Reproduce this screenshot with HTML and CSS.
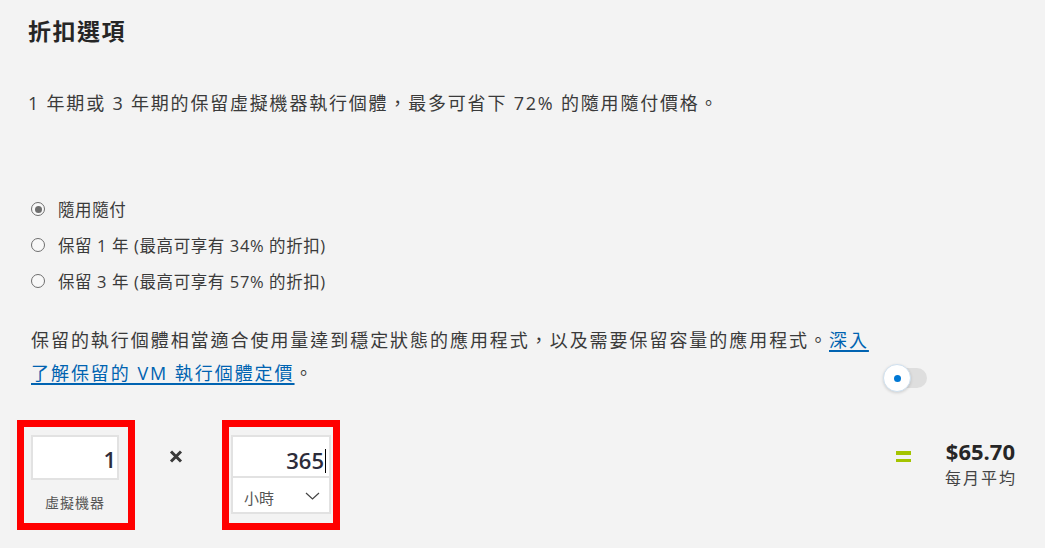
FILE: index.html
```html
<!DOCTYPE html>
<html lang="zh-Hant">
<head>
<meta charset="utf-8">
<title>折扣選項</title>
<link rel="stylesheet" href="styles.css">
</head>
<body>
<div class="page">
  <h2 class="title">折扣選項</h2>
  <p class="intro">1 年期或 3 年期的保留虛擬機器執行個體，最多可省下 72% 的隨用隨付價格。</p>
  <div class="radios">
    <label class="radio-row"><span class="radio checked"></span><span class="radio-label">隨用隨付</span></label>
    <label class="radio-row"><span class="radio"></span><span class="radio-label">保留 1 年 (最高可享有 34% 的折扣)</span></label>
    <label class="radio-row"><span class="radio"></span><span class="radio-label">保留 3 年 (最高可享有 57% 的折扣)</span></label>
  </div>
  <div class="note-row">
    <p class="note">保留的執行個體相當適合使用量達到穩定狀態的應用程式，以及需要保留容量的應用程式。<a href="#" class="link">深入了解保留的 VM 執行個體定價</a>。</p>
    <div class="toggle"><span class="track"></span><span class="knob"><span class="dot"></span></span></div>
  </div>
  <div class="calc">
    <div class="box box-vm">
      <div class="num-input">1</div>
      <div class="box-label">虛擬機器</div>
    </div>
    <div class="op times"><svg width="14" height="13" viewBox="0 0 14 13"><path d="M2 1.5 L12 11.5 M12 1.5 L2 11.5" stroke="#3a3a3a" stroke-width="3" stroke-linecap="butt"/></svg></div>
    <div class="box box-hours">
      <div class="combo">
        <div class="num-input hours">365<span class="caret"></span></div>
        <div class="select"><span>小時</span>
          <svg class="chev" width="15" height="8" viewBox="0 0 15 8"><path d="M1 1 L7.5 7 L14 1" fill="none" stroke="#444" stroke-width="1.2"/></svg>
        </div>
      </div>
    </div>
    <div class="result">
      <div class="equals"><span></span><span></span></div>
      <div class="price">
        <div class="amount">$65.70</div>
        <div class="per">每月平均</div>
      </div>
    </div>
  </div>
</div>
</body>
</html>
```

FILE: styles.css
```css
* { box-sizing: border-box; }
html, body {
  margin: 0;
  padding: 0;
  background: #f3f3f3;
}
body {
  font-family: "Open Sans", "Noto Sans CJK TC", sans-serif;
  color: #3a3a3a;
  width: 1045px;
  height: 548px;
  overflow: hidden;
}
.page {
  padding: 16px 30px 0 28px;
}
.title {
  margin: 0;
  font-size: 23px;
  line-height: 30px;
  font-weight: 700;
  color: #262626;
  letter-spacing: 1.5px;
}
.intro {
  margin: 45px 0 0 0;
  font-size: 18px;
  line-height: 24px;
  letter-spacing: 1.8px;
}
.radios {
  margin-top: 76px;
  display: flex;
  flex-direction: column;
}
.radio-row {
  display: flex;
  align-items: center;
  height: 36px;
  font-size: 16.5px;
  letter-spacing: 0.6px;
}
.radio {
  width: 14px;
  height: 14px;
  border: 1.5px solid #6e6e6e;
  border-radius: 50%;
  margin-left: 3px;
  margin-right: 13px;
  display: flex;
  align-items: center;
  justify-content: center;
  background: #f8f8f8;
}
.radio.checked::after {
  content: "";
  width: 7px;
  height: 7px;
  border-radius: 50%;
  background: #6e6e6e;
}
.note-row {
  display: flex;
  margin-top: 25px;
}
.note {
  flex: 0 0 850px;
  margin: 0 0 0 3px;
  font-size: 18px;
  line-height: 33px;
  letter-spacing: 1.95px;
}
.link {
  color: #0063b1;
  text-decoration: underline;
  text-underline-offset: 3px;
  text-decoration-thickness: 2px;
}
.toggle {
  position: relative;
  width: 44px;
  height: 28px;
  margin-left: 2px;
  align-self: flex-end;
  margin-bottom: -2px;
}
.track {
  position: absolute;
  left: 10px;
  top: 4px;
  width: 34px;
  height: 20px;
  border-radius: 10px;
  background: #dedede;
}
.knob {
  position: absolute;
  left: 0;
  top: 0;
  width: 28px;
  height: 28px;
  border-radius: 50%;
  background: #fff;
  border: 1px solid #cfe0ef;
  box-shadow: 0 1px 3px rgba(0,0,0,0.15);
  display: flex;
  align-items: center;
  justify-content: center;
}
.dot {
  width: 7px;
  height: 7px;
  border-radius: 50%;
  background: #0078d4;
}
.calc {
  display: flex;
  align-items: flex-start;
  margin: 30px 0 0 -11px;
}
.box {
  width: 118px;
  height: 110px;
  border: 7px solid #ff0000;
}
.box-vm {
  padding: 8px 9px 0 7px;
}
.num-input {
  height: 45px;
  background: #fff;
  border: 2px solid #e2e2e2;
  font-size: 22px;
  font-weight: 600;
  color: #2c2c3a;
  text-align: right;
  padding: 0 1px;
  line-height: 45px;
}
.box-label {
  margin-top: 13px;
  text-align: center;
  font-size: 14px;
  letter-spacing: 1px;
  color: #555;
  line-height: 20px;
}
.op.times {
  width: 87px;
  padding-right: 6px;
  display: flex;
  justify-content: center;
  margin-top: 30px;
}
.box-hours {
  padding: 8px 2px 0 2px;
}
.combo {
  background: #fff;
  border: 2px solid #e2e2e2;
}
.num-input.hours {
  border: none;
  height: 41px;
  line-height: 47px;
  border-bottom: 2px solid #e2e2e2;
  padding-right: 3px;
  position: relative;
}
.caret {
  display: inline-block;
  width: 1px;
  height: 24px;
  background: #000;
  vertical-align: -4px;
  margin-left: 1px;
}
.select {
  height: 34px;
  display: flex;
  align-items: center;
  justify-content: space-between;
  padding: 4px 9px 0 11px;
  font-size: 15px;
  color: #555;
}
.chev { margin-top: -3px; }
.result {
  margin-left: auto;
  display: flex;
  align-items: flex-start;
  margin-top: 16px;
}
.equals {
  display: flex;
  flex-direction: column;
  gap: 4px;
  margin-top: 15px;
  margin-right: 34px;
}
.equals span {
  width: 15px;
  height: 3.5px;
  background: #a4c400;
}
.price {
  text-align: right;
}
.amount {
  font-size: 22px;
  font-weight: 700;
  color: #262626;
  line-height: 30px;
}
.per {
  font-size: 16px;
  letter-spacing: 2px;
  color: #444;
  line-height: 24px;
  margin-right: -2px;
}
```
